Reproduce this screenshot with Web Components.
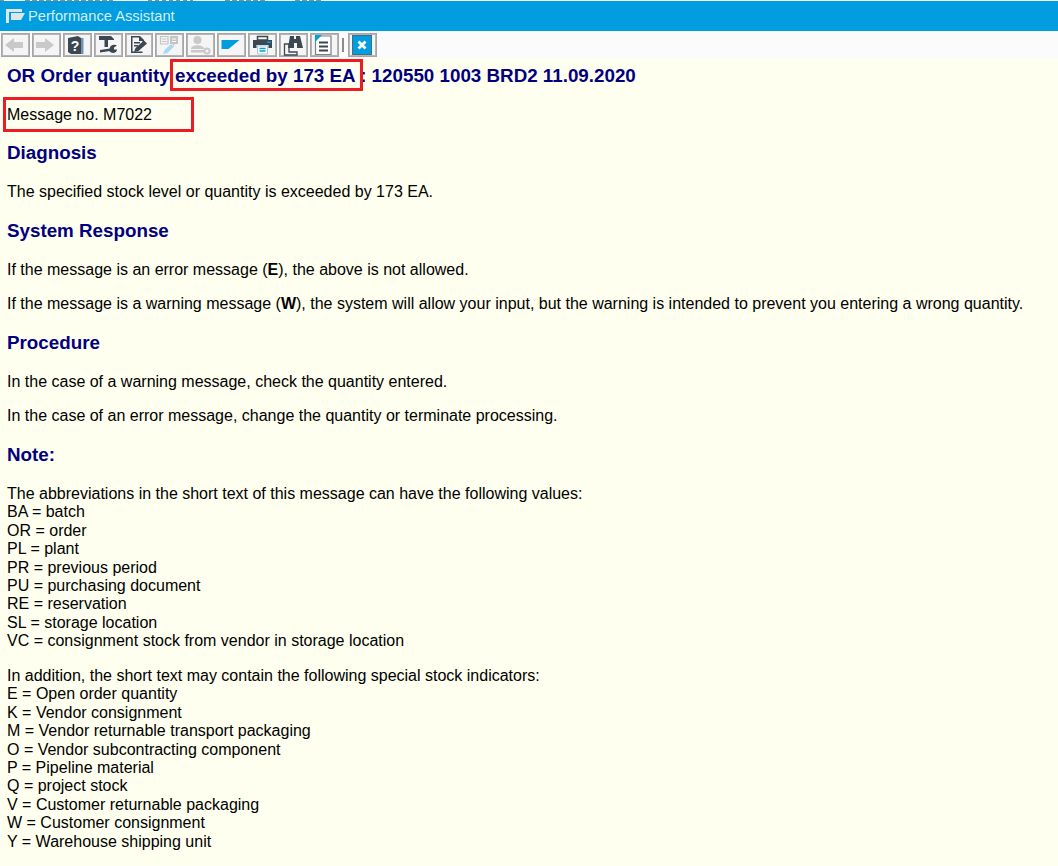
<!DOCTYPE html>
<html>
<head>
<meta charset="utf-8">
<style>
html, body { margin: 0; padding: 0; background: #ffffef; overflow: hidden; }
body { width: 1058px; height: 866px; position: relative; font-family: "Liberation Sans", Arial, sans-serif; }
</style>
</head>
<body>
<sap-window>
	<sap-titlebar slot="title">Performance Assistant</sap-titlebar>
	<sap-toolbar slot="tools">
		<sap-tool icon="back"></sap-tool>
		<sap-tool icon="forward"></sap-tool>
		<sap-tool icon="help"></sap-tool>
		<sap-tool icon="tools"></sap-tool>
		<sap-tool icon="edit"></sap-tool>
		<sap-tool icon="translate"></sap-tool>
		<sap-tool icon="user"></sap-tool>
		<sap-tool icon="flag"></sap-tool>
		<sap-tool icon="print"></sap-tool>
		<sap-tool icon="find"></sap-tool>
		<sap-tool icon="note"></sap-tool>
		<sap-sep></sap-sep>
		<sap-tool icon="close"></sap-tool>
	</sap-toolbar>
	<sap-doc>
		<sap-head>OR Order quantity exceeded by 173 EA : 120550 1003 BRD2 11.09.2020</sap-head>
		<sap-para>Message no. M7022</sap-para>
		<sap-head>Diagnosis</sap-head>
		<sap-para>The specified stock level or quantity is exceeded by 173 EA.</sap-para>
		<sap-head>System Response</sap-head>
		<sap-para>If the message is an error message (<b>E</b>), the above is not allowed.</sap-para>
		<sap-para>If the message is a warning message (<b>W</b>), the system will allow your input, but the warning is intended to prevent you entering a wrong quantity.</sap-para>
		<sap-head>Procedure</sap-head>
		<sap-para>In the case of a warning message, check the quantity entered.</sap-para>
		<sap-para>In the case of an error message, change the quantity or terminate processing.</sap-para>
		<sap-head>Note:</sap-head>
		<sap-para>The abbreviations in the short text of this message can have the following values:<br>BA = batch<br>OR = order<br>PL = plant<br>PR = previous period<br>PU = purchasing document<br>RE = reservation<br>SL = storage location<br>VC = consignment stock from vendor in storage location</sap-para>
		<sap-para>In addition, the short text may contain the following special stock indicators:<br>E = Open order quantity<br>K = Vendor consignment<br>M = Vendor returnable transport packaging<br>O = Vendor subcontracting component<br>P = Pipeline material<br>Q = project stock<br>V = Customer returnable packaging<br>W = Customer consignment<br>Y = Warehouse shipping unit</sap-para>
	</sap-doc>
</sap-window>
<red-box style="left:170px;top:59px;width:193px;height:32px"></red-box>
<red-box style="left:3px;top:97px;width:191px;height:35px"></red-box>

<script>
const DARK = "#3d4752";
const OFF  = "#c9c9c9";
const BLUE = "#009de0";

const ICONS = {
	back      : `<path d="M1 11 L10 4 V8 H19 V14 H10 V18 Z" fill="${OFF}"/>`,
	forward   : `<path d="M19 11 L10 4 V8 H1 V14 H10 V18 Z" fill="${OFF}"/>`,
	help      : `<path d="M2 4 L12 2 L15 4 V20 H5 L2 18 Z" fill="${DARK}"/><path d="M15 4 H17.5 V20 H15 Z" fill="#6d94b0"/><text x="9" y="16.5" font-family="Liberation Sans" font-weight="700" font-size="14" fill="#fff" text-anchor="middle">?</text>`,
	tools     : `<path d="M2 2 H14 L17 5 V6 H11 V13 H7.5 V6 H2 Z" fill="${DARK}"/><path d="M3 16 L13 14.5 V17 L3 18.5 Z" fill="${DARK}"/><path d="M12.5 15 C13 11 17 10 20 11.5 L17 13.5 V15.5 L20 15.5 C20 19 15 20 12.5 17.5 Z" fill="${DARK}"/>`,
	edit      : `<path d="M3 2 H12 L16 6 V8.5 L14.5 10 V7 H11 V3.5 H4.5 V17.5 H14.5 V19 H3 Z" fill="${DARK}"/><path d="M6 8 H12 V9.5 H6 Z M6 11 H10 V12.5 H6 Z" fill="${DARK}"/><path d="M6 18 L7.5 14 L16 6.5 L19 9.5 L10.5 17 Z" fill="${DARK}"/>`,
	translate : `<path d="M1.5 2.5 H9 V10 H1.5 Z" fill="none" stroke="#c4c4c4" stroke-width="1.2"/><path d="M3 5 H7.5 M3 7.5 H7.5" stroke="#c4c4c4" stroke-width="1.1"/><path d="M11 2 H19 V10 H16 L14 12 V10 H11 Z" fill="#c4c4c4"/><path d="M13 5 H17 M13 7.5 H17" stroke="#fff" stroke-width="1"/><path d="M4 20 L5.5 16 L12 10 L15 12.5 L8.5 19 Z" fill="#a9d9f2"/>`,
	user      : `<circle cx="7.5" cy="6" r="4" fill="${OFF}"/><path d="M1 15 C1 10 14 10 14 15 Z" fill="${OFF}"/><path d="M1 16 H15 V18.5 H1 Z" fill="${OFF}"/><circle cx="17" cy="17" r="2.6" fill="none" stroke="${OFF}" stroke-width="2"/>`,
	flag      : `<path d="M0.5 6 H18.5 L7.5 15 H0.5 Z" fill="${BLUE}"/>`,
	print     : `<path d="M5.5 2.5 H15.5 V6 H5.5 Z" fill="none" stroke="${DARK}" stroke-width="1.5"/><path d="M1 6 H20 V14 H16.5 V11 H4.5 V14 H1 Z" fill="${DARK}"/><path d="M15 7.5 H19 V9 H15 Z" fill="${BLUE}"/><path d="M5.5 12 H15.5 V20 H5.5 Z" fill="#fff" stroke="#9cc9e6" stroke-width="1"/><path d="M7.5 14.5 H13.5 M7.5 17 H13.5" stroke="${BLUE}" stroke-width="1.4"/>`,
	find      : `<path d="M2.5 10 H7 V18 H15 V21 H2.5 Z" fill="none" stroke="${DARK}" stroke-width="1.3"/><path d="M8 2 H12 V5 H14 V2 H18 L21 14 H15 V9 H12 V14 H6 Z" fill="${DARK}"/>`,
	note      : `<path d="M2.5 2 H18 V20.5 H2.5 Z" fill="#fff" stroke="#7b7f86" stroke-width="1.2"/><path d="M2 1 H9 L2 8 Z" fill="${BLUE}"/><path d="M6 7.5 H15 V9.5 H6 Z M6 11.5 H15 V13.5 H6 Z M6 15.5 H15 V17.5 H6 Z" fill="${DARK}"/>`,
	close     : `<rect x="1.5" y="1.5" width="19" height="19" fill="${BLUE}" stroke="#4a6a80"/><path d="M7.5 7.5 L14.5 14.5 M14.5 7.5 L7.5 14.5" stroke="#fff" stroke-width="2.8"/>`
};

function define_el (name, css, html)
{
	customElements.define(name, class extends HTMLElement
	{
		constructor ()
		{
			super();
			this.attachShadow({mode:"open"});
			this.shadowRoot.innerHTML = `<style>${css}</style>${html}`;
		}
	});
}

// the top pixel row is what is left of the window behind
define_el("sap-window", `
	:host { display: flex; flex-direction: column; height: 866px; background: #fff; }
	.behind {
		height: 1px; flex: none;
		background:
			repeating-linear-gradient(90deg, #8a8a8a 0 5px, #fff 5px 7px) 25px 0 / 88px 1px no-repeat,
			repeating-linear-gradient(90deg, #8a8a8a 0 4px, #fff 4px 7px) 148px 0 / 45px 1px no-repeat,
			repeating-linear-gradient(90deg, #8a8a8a 0 5px, #fff 5px 7px) 225px 0 / 42px 1px no-repeat,
			repeating-linear-gradient(90deg, #8a8a8a 0 5px, #fff 5px 7px) 295px 0 / 27px 1px no-repeat,
			linear-gradient(#8a8a8a, #8a8a8a) 0 0 / 4px 1px no-repeat;
	}
`, `<div class="behind"></div><slot name="title"></slot><slot name="tools"></slot><slot></slot>`);

define_el("sap-titlebar", `
	:host {
		display: flex; flex: none; align-items: center; gap: 3px;
		height: 30px; padding: 0 0 1px 6px; box-sizing: border-box;
		background: #009de0; color: #d6eefa;
		font-size: 14.67px;
	}
	svg { display: block; }
`, `<svg width="19" height="14" viewBox="0 0 19 14">
		<path d="M0 0 H16 V3 H5 V11 H3 V14 H0 Z" fill="#dfe6ea"/>
		<path d="M5 4 H19 L15 11 H5 Z" fill="#dfe6ea"/>
		<path d="M3 3 H5 V14 H3 Z" fill="#009de0"/>
	</svg><slot></slot>`);

define_el("sap-toolbar", `
	:host {
		display: flex; flex: none; align-items: center; gap: 2px;
		height: 27px; padding: 2px 0 1px 1px; box-sizing: border-box;
		background: #fbfbfb;
	}
`, `<slot></slot>`);

customElements.define("sap-tool", class extends HTMLElement
{
	constructor ()
	{
		super();
		this.attachShadow({mode:"open"});
	}

	connectedCallback ()
	{
		let icon = ICONS[this.getAttribute("icon")] || "";
		this.shadowRoot.innerHTML = `
			<style>
			:host {
				display: flex; align-items: center; justify-content: center;
				width: 28.9px; height: 24px; box-sizing: border-box;
				border: 1px solid #a6a6a6;
				box-shadow: inset 0 0 0 1px #b5b5b5;
				background: #f5f5f5;
			}
			svg { display: block; flex: none; }
			</style>
			<svg width="22" height="22" viewBox="0 0 22 22">${icon}</svg>`;
	}
});

define_el("sap-sep", `
	:host { display: block; width: 2px; height: 14px; margin: 0 2px 0 1px; background: #8c8c8c; }
`, ``);

define_el("sap-doc", `
	:host { display: block; flex: 1; min-height: 0; padding: 6.6px 7px 0; background: #ffffef; color: #000; font-size: 16px; line-height: 18.45px; }
`, `<slot></slot>`);

define_el("sap-head", `
	:host { display: block; margin: 18.1px 0 19.5px; font-size: 18.8px; line-height: 21.5px; font-weight: 700; color: #000080; }
	:host(:first-child) { margin-top: 0; }
`, `<slot></slot>`);

define_el("sap-para", `
	:host { display: block; margin: 16px 0; }
`, `<slot></slot>`);

define_el("red-box", `
	:host { display: block; position: absolute; box-sizing: border-box; border: 3px solid #ed1c24; }
`, ``);
</script>
</body>
</html>
